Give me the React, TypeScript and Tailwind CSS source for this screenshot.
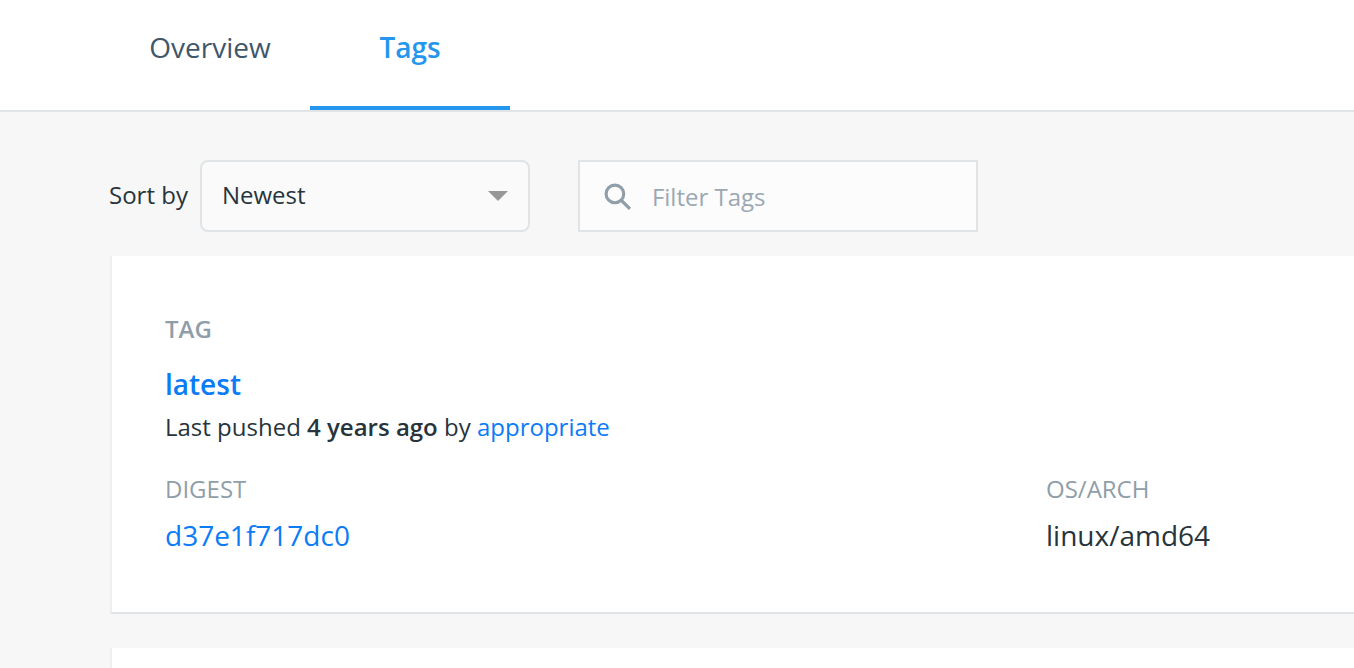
const font = "font-['Open_Sans',sans-serif]";

function Tabs() {
  return (
    <div className="flex h-[112px] border-b-2 border-[#e0e4e7] bg-white pl-[110px]">
      <div className="flex h-[110px] w-[200px] items-center justify-center pb-[16px] text-[28px] leading-[36px] text-[#40576b]">
        Overview
      </div>
      <div className="flex h-[110px] w-[200px] items-center justify-center border-b-4 border-[#2496ed] pb-[12px] text-[28px] font-semibold leading-[36px] text-[#2496ed]">
        Tags
      </div>
    </div>
  );
}

function Toolbar() {
  return (
    <div className="flex items-center pl-[109px] pt-[48px]">
      <span className="mr-[12px] pb-[2px] text-[24px] leading-[32px] text-[#27343c]">Sort by</span>
      <div className="flex h-[72px] w-[330px] items-center justify-between rounded-[8px] border-2 border-[#e0e4e7] bg-[#fafafa] pl-[20px] pr-[20px]">
        <span className="pb-[2px] text-[24px] leading-[32px] text-[#27343c]">Newest</span>
        <span className="h-0 w-0 border-x-[10px] border-t-[10px] border-x-transparent border-t-[#979797]" />
      </div>
      <div className="ml-[48px] flex h-[72px] w-[400px] items-center border-2 border-[#e0e4e7] bg-[#fcfcfc] pl-[23px]">
        <svg width="29" height="29" viewBox="0 0 28 28" fill="none" className="mr-[20px] shrink-0">
          <circle cx="11.5" cy="11.5" r="8.5" stroke="#8f9ea8" strokeWidth="3" />
          <path d="M17.5 17.5L26 26" stroke="#8f9ea8" strokeWidth="3.2" />
        </svg>
        <span className="pt-[2px] text-[24px] leading-[32px] text-[#9aa8b3]">Filter Tags</span>
      </div>
    </div>
  );
}

function Card() {
  return (
    <div className="ml-[110px] mt-[24px] h-[358px] border-b-2 border-l-2 border-b-[#e0e4e7] border-l-[#eeeff0] bg-white pl-[53px] pt-[57px]">
      <div className="text-[24px] font-semibold leading-[32px] text-[#8f9ea8]">TAG</div>
      <div className="mt-[19px] text-[28px] font-semibold leading-[40px] text-[#0b7cf5]">latest</div>
      <div className="mt-[3px] text-[24px] leading-[40px] text-[#27343c]">
        Last pushed <span className="font-semibold">4 years ago</span> by{" "}
        <span className="text-[#0b7cf5]">appropriate</span>
      </div>
      <div className="mt-[26px] flex">
        <div className="w-[881px]">
          <div className="text-[24px] leading-[32px] text-[#8f9ea8]">DIGEST</div>
          <div className="mt-[12px] text-[28px] leading-[36px] text-[#0b7cf5]">d37e1f717dc0</div>
        </div>
        <div>
          <div className="text-[24px] leading-[32px] text-[#8f9ea8]">OS/ARCH</div>
          <div className="mt-[12px] text-[28px] leading-[36px] text-[#27343c]">linux/amd64</div>
        </div>
      </div>
    </div>
  );
}

export default function App() {
  return (
    <div className={`${font} h-[668px] overflow-hidden bg-[#f7f7f7]`}>
      <Tabs />
      <Toolbar />
      <Card />
      <div className="ml-[110px] mt-[34px] h-[40px] border-l-2 border-[#eeeff0] bg-white" />
    </div>
  );
}
